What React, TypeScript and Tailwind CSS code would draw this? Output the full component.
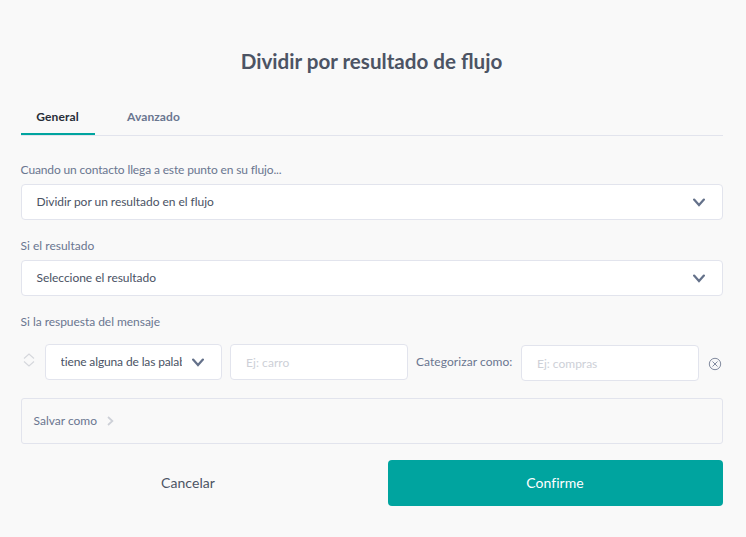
import React from "react";

function ChevronDown() {
  return (
    <svg width="12" height="9" viewBox="0 0 12 9" fill="none" className="mt-px shrink-0">
      <path d="M1.1 1.6L6 7L10.9 1.6" stroke="#64718a" strokeWidth="2.2" strokeLinecap="round" />
    </svg>
  );
}

function SelectField({ label, value, labelClass = "" }: { label: string; value: string; labelClass?: string }) {
  return (
    <div className="mb-4">
      <label className={`-ml-[0.4px] mb-1 block h-5 leading-5 text-[#6a7690] ${labelClass}`}>{label}</label>
      <button className="flex h-9 w-full items-center justify-between rounded border border-[#e2e4ed] bg-white pr-[17px] pl-[14.5px] text-[#4a5264]">
        <span className="leading-4 tracking-[-0.04px]">{value}</span>
        <ChevronDown />
      </button>
    </div>
  );
}

function ReorderIcon() {
  return (
    <svg width="12" height="14" viewBox="0 0 12 14" fill="none" className="mb-[5px] ml-[2px] shrink-0">
      <path d="M1 5.5L6 1L11 5.5M1 8.5L6 13L11 8.5" stroke="#d5d7dc" strokeWidth="1.1" />
    </svg>
  );
}

export default function App() {
  return (
    <main className="h-[537px] w-[746px] bg-[#f9f9f9] pt-[46px] pr-[23px] pl-[21px] font-['Lato',sans-serif] text-[12px]">
      <h1 className="pr-px text-center text-[20.6px] leading-[30px] font-bold text-[#4c5464]">Dividir por resultado de flujo</h1>
      <nav className="mt-[22px] flex h-[38px] border-b border-[#e2e4ed] font-bold">
        <button className="h-[37px] w-[74px] border-b-2 border-[#00a49f] px-0 pt-[3px] pr-px tracking-[0.12px] text-[#282d38]">General</button>
        <button className="ml-4 h-[37px] w-[85px] pt-px tracking-[0.08px] text-[#6a7690]">Avanzado</button>
      </nav>
      <section className="mt-6">
        <SelectField label="Cuando un contacto llega a este punto en su flujo..." value="Dividir por un resultado en el flujo" labelClass="tracking-[-0.14px]" />
        <SelectField label="Si el resultado" value="Seleccione el resultado" />
        <div className="-ml-[0.4px] h-5 leading-5 tracking-[-0.04px] text-[#6a7690]">Si la respuesta del mensaje</div>
        <div className="mt-3 flex h-[37px] items-center">
          <ReorderIcon />
          <button className="mb-px ml-[10px] flex h-9 w-[177px] items-center justify-between rounded border border-[#e2e4ed] bg-white pr-[17px] pl-[14.5px] text-[#4a5264]">
            <span className="w-[121px] overflow-hidden text-left leading-4 tracking-[-0.13px] whitespace-nowrap">tiene alguna de las palabras</span>
            <ChevronDown />
          </button>
          <input placeholder="Ej: carro" className="mb-px ml-2 h-9 w-[178px] rounded border border-[#e2e4ed] bg-white px-[15px] tracking-[0.06px] placeholder:text-[#cdd0d7]" />
          <span className="ml-2 w-[105px] pb-px tracking-[0.06px] whitespace-nowrap text-[#6a7690]">Categorizar como:</span>
          <input placeholder="Ej: compras" className="mt-px h-9 w-[178px] rounded border border-[#e2e4ed] bg-white px-[15px] placeholder:text-[#cdd0d7]" />
          <svg width="14" height="14" viewBox="0 0 14 14" fill="none" stroke="#828b9f" className="mt-[3px] ml-[9px] shrink-0">
            <circle cx="7" cy="7" r="5.7" />
            <path d="M4.5 4.5L9.5 9.5M9.5 4.5L4.5 9.5" />
          </svg>
        </div>
        <button className="mt-[17px] flex h-[46px] w-full items-center rounded-[3px] border border-[#e2e4ed] pl-[11.5px] text-[#6a7690]">
          <span>Salvar como</span>
          <svg width="7" height="10" viewBox="0 0 7 10" fill="none" className="ml-[10px]">
            <path d="M1 1L5.4 5L1 9" stroke="#cdd0d7" strokeWidth="1.7" />
          </svg>
        </button>
      </section>
      <footer className="mt-4 grid grid-cols-[335px_335px] justify-between text-[14px]">
        <button className="h-[46px] pr-px pb-0.5 tracking-[0.05px] text-[#4c5464]">Cancelar</button>
        <button className="h-[46px] rounded bg-[#00a49f] pr-px pb-0.5 text-[14px] tracking-[0.05px] text-white">Confirme</button>
      </footer>
    </main>
  );
}
